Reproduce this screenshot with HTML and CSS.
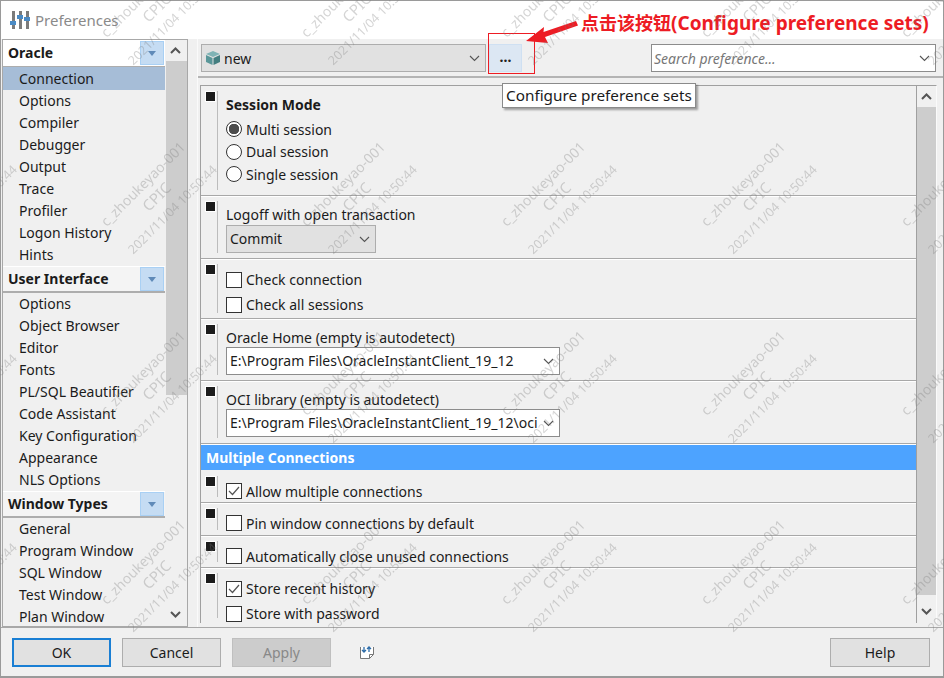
FILE: index.html
```html
<!DOCTYPE html>
<html lang="en">
<head>
    <meta charset="UTF-8">
    <meta name="viewport" content="width=device-width, initial-scale=1.0">
    <title>Preferences</title>
    <link rel="stylesheet" href="styles.css">
</head>
<body>
    <svg class="defs" width="0" height="0">
        <symbol id="chev-down" viewBox="0 0 11 7"><path d="M1 1l4.500 4.500L10 1" fill="none" stroke="currentColor" stroke-width="1.100"/></symbol>
        <symbol id="chev-up" viewBox="0 0 11 7"><path d="M1 6l4.500-4.500L10 6" fill="none" stroke="currentColor" stroke-width="2"/></symbol>
        <symbol id="chev-bold" viewBox="0 0 11 7"><path d="M1 1l4.500 4.500L10 1" fill="none" stroke="currentColor" stroke-width="2"/></symbol>
        <symbol id="tick" viewBox="0 0 16 16"><path d="M3 8l3.500 3.500L13 4" fill="none" stroke="#555" stroke-width="1.200"/></symbol>
    </svg>

    <div class="window">
        <header class="titlebar">
            <svg class="app-icon" width="20" height="20" viewBox="0 0 20 20">
                <path d="M2 1h3v18H2zM9 1h3v18H9zM16 1h3v18h-3z" fill="#7b7b7b"/>
                <path d="M0 11h6v4H0zM7 5h6v4H7zM14 7h6v4h-6z" fill="#4a8ac4"/>
            </svg>
            <span class="title">Preferences</span>
        </header>

        <div class="content">
            <aside class="sidebar">
                <div class="nav">
                    <div class="nav-head first">Oracle<span class="collapse"></span></div>
                    <div class="nav-item active">Connection</div>
                    <div class="nav-item">Options</div>
                    <div class="nav-item">Compiler</div>
                    <div class="nav-item">Debugger</div>
                    <div class="nav-item">Output</div>
                    <div class="nav-item">Trace</div>
                    <div class="nav-item">Profiler</div>
                    <div class="nav-item">Logon History</div>
                    <div class="nav-item">Hints</div>
                    <div class="nav-head">User Interface<span class="collapse"></span></div>
                    <div class="nav-item">Options</div>
                    <div class="nav-item">Object Browser</div>
                    <div class="nav-item">Editor</div>
                    <div class="nav-item">Fonts</div>
                    <div class="nav-item">PL/SQL Beautifier</div>
                    <div class="nav-item">Code Assistant</div>
                    <div class="nav-item">Key Configuration</div>
                    <div class="nav-item">Appearance</div>
                    <div class="nav-item">NLS Options</div>
                    <div class="nav-head">Window Types<span class="collapse"></span></div>
                    <div class="nav-item">General</div>
                    <div class="nav-item">Program Window</div>
                    <div class="nav-item">SQL Window</div>
                    <div class="nav-item">Test Window</div>
                    <div class="nav-item">Plan Window</div>
                </div>
                <div class="scrollbar side-scroll">
                    <svg class="arrow"><use href="#chev-up"/></svg>
                    <div class="thumb"></div>
                    <svg class="arrow down"><use href="#chev-bold"/></svg>
                </div>
            </aside>

            <main class="main">
                <div class="toolbar">
                    <div class="combo set-combo">
                        <svg class="box-icon" width="16" height="16" viewBox="0 0 16 16">
                            <path d="M8 1l7 3-7 3-7-3z" fill="#7fb3b5"/>
                            <path d="M1 5l6.500 3v7L1 12z" fill="#5a9799"/>
                            <path d="M8.500 8L15 5v7l-6.500 3z" fill="#437e80"/>
                        </svg>
                        <span class="combo-text">new</span>
                        <svg class="chev"><use href="#chev-down"/></svg>
                    </div>
                    <button class="dots">...</button>
                    <div class="combo search">
                        <span class="placeholder">Search preference...</span>
                        <svg class="chev"><use href="#chev-down"/></svg>
                    </div>
                </div>

                <div class="panel">
                    <div class="sections">
                        <section class="section s-mode">
                            <h3 class="sec-title">Session Mode</h3>
                            <label class="row"><span class="radio on"></span>Multi session</label>
                            <label class="row"><span class="radio"></span>Dual session</label>
                            <label class="row"><span class="radio"></span>Single session</label>
                        </section>
                        <section class="section s-logoff">
                            <div class="field-label">Logoff with open transaction</div>
                            <div class="combo small">
                                <span class="combo-text">Commit</span>
                                <svg class="chev"><use href="#chev-down"/></svg>
                            </div>
                        </section>
                        <section class="section s-check">
                            <label class="row wide"><span class="check"></span>Check connection</label>
                            <label class="row wide"><span class="check"></span>Check all sessions</label>
                        </section>
                        <section class="section s-path">
                            <div class="field-label">Oracle Home (empty is autodetect)</div>
                            <div class="combo path">
                                <span class="combo-text">E:\Program Files\OracleInstantClient_19_12</span>
                                <svg class="chev"><use href="#chev-down"/></svg>
                            </div>
                        </section>
                        <section class="section s-path">
                            <div class="field-label">OCI library (empty is autodetect)</div>
                            <div class="combo path">
                                <span class="combo-text">E:\Program Files\OracleInstantClient_19_12\oci</span>
                                <svg class="chev"><use href="#chev-down"/></svg>
                            </div>
                        </section>
                        <div class="band">Multiple Connections</div>
                        <section class="section s-one">
                            <label class="row"><span class="check"><svg width="16" height="16"><use href="#tick"/></svg></span>Allow multiple connections</label>
                        </section>
                        <section class="section s-one tall">
                            <label class="row"><span class="check"></span>Pin window connections by default</label>
                        </section>
                        <section class="section s-one">
                            <label class="row"><span class="check"></span>Automatically close unused connections</label>
                        </section>
                        <section class="section s-last">
                            <label class="row wide"><span class="check"><svg width="16" height="16"><use href="#tick"/></svg></span>Store recent history</label>
                            <label class="row wide"><span class="check"></span>Store with password</label>
                        </section>
                    </div>
                    <div class="scrollbar main-scroll">
                        <svg class="arrow"><use href="#chev-up"/></svg>
                        <div class="thumb"></div>
                        <svg class="arrow down"><use href="#chev-bold"/></svg>
                    </div>
                </div>
            </main>
        </div>

        <footer class="footer">
            <button class="btn default">OK</button>
            <button class="btn">Cancel</button>
            <button class="btn disabled">Apply</button>
            <svg class="save-icon" width="16" height="16" viewBox="0 0 16 16">
                <path d="M1.500 2v11.500h9l4-4V2" fill="#fff" stroke="#777"/>
                <path d="M10.500 13.500v-4h4" fill="none" stroke="#777"/>
                <path d="M5 2v5M3 5l2 2 2-2M10 7V2M8 4l2-2 2 2" fill="none" stroke="#2d6ca8" stroke-width="1.300"/>
            </svg>
            <button class="btn help">Help</button>
        </footer>
    </div>

    <!-- things drawn on top of the dialog -->
    <div class="tooltip">Configure preference sets</div>
    <div class="mark-box"></div>
    <svg class="arrow-note" width="60" height="30" viewBox="0 0 60 30">
        <path d="M1 23L19 9l-.500 5L51 3l2 4.500L20 19l3 6z" fill="#ed1c24"/>
    </svg>
    <div class="note">点击该按钮<span class="note-en">(Configure preference sets)</span></div>

    <svg class="watermark" width="944" height="678">
        <defs>
            <pattern id="wm" x="43" y="-105" width="200" height="189" patternUnits="userSpaceOnUse">
                <text class="wm-user" transform="rotate(-45 100 100)" x="100" y="105">c_zhoukeyao-001</text>
                <text class="wm-org" transform="rotate(-45 114 113)" x="114" y="118">CPIC</text>
                <text class="wm-date" transform="rotate(-45 129 125)" x="129" y="130">2021/11/04 10:50:44</text>
            </pattern>
        </defs>
        <rect width="944" height="678" fill="url(#wm)"/>
    </svg>
</body>
</html>
```

FILE: styles.css
```css
* {
    box-sizing: border-box;
}

body {
    margin: 0;
    width: 944px;
    height: 678px;
    overflow: hidden;
    position: relative;
    font-family: "Noto Sans", sans-serif;
    font-size: 14px;
    color: #1b1b1b;
    background: #f0f0f0;
}

.defs {
    position: absolute;
}

.window {
    height: 678px;
    display: flex;
    flex-direction: column;
    border: 1px solid #9a9a9a;
    border-width: 1px 1px 2px 1px;
}

.titlebar {
    height: 38px;
    flex: none;
    display: flex;
    align-items: center;
    padding-left: 9px;
    background: #fff;
}

.title {
    margin-left: 5px;
    font-size: 15px;
    color: #8a8a8a;
}

.content {
    height: 588px;
    flex: none;
    display: flex;
}

/* left tree */
.sidebar {
    width: 186px;
    flex: none;
    margin-left: 1px;
    display: flex;
    border: 1px solid #a8a8a8;
    overflow: hidden;
}

.nav {
    width: 162px;
    flex: none;
}

.nav-head {
    height: 27px;
    display: flex;
    align-items: center;
    justify-content: space-between;
    padding: 0 0 2px 5px;
    font-weight: 700;
    background: #f4f4f4;
    border-top: 1px solid #fff;
    border-bottom: 2px solid #adadad;
}

.nav-head.first {
    height: 28px;
    border-top: 0;
    background: #fff;
}

.collapse {
    width: 24px;
    height: 24px;
    margin: 0 1px -2px 0;
    display: flex;
    align-items: center;
    justify-content: center;
    background: #c5dcf3;
    border: 1px solid #a9d0f4;
}

.collapse::after {
    content: "";
    border: 4px solid transparent;
    border-top: 5px solid #5f8ab8;
    border-bottom: 0;
}

.nav-item {
    height: 22px;
    line-height: 22px;
    padding-left: 16px;
    white-space: nowrap;
}

.nav-item.active {
    height: 23px;
    margin-top: -1px;
    line-height: 24px;
    background: #a6bdd7;
}

/* scrollbars */
.scrollbar {
    position: relative;
    width: 19px;
    flex: none;
    color: #555;
}

.scrollbar .arrow {
    position: absolute;
    left: 4px;
    top: 7px;
    width: 11px;
    height: 7px;
}

.scrollbar .arrow.down {
    top: auto;
    bottom: 8px;
}

.scrollbar .thumb {
    margin-top: 21px;
    background: #cdcdcd;
}

.side-scroll {
    margin-left: 1px;
    width: 21px;
}

.side-scroll .thumb {
    height: 334px;
}

.main-scroll .thumb {
    height: 488px;
}

/* right side */
.main {
    flex: 1;
    min-width: 0;
    margin-left: 9px;
    display: flex;
    flex-direction: column;
    border-left: 1px solid #fafafa;
}

.toolbar {
    height: 39px;
    flex: none;
    display: flex;
    padding: 5px 0 0 3px;
    border-bottom: 2px solid #b4b4b4;
}

.combo {
    height: 28px;
    display: flex;
    align-items: center;
    border: 1px solid #adadad;
    background: #e1e1e1;
    white-space: nowrap;
    overflow: hidden;
}

.combo-text {
    padding: 0 0 2px 3px;
}

.chev {
    width: 11px;
    height: 7px;
    margin-left: auto;
    margin-right: 5px;
    flex: none;
    color: #555;
}

.set-combo {
    width: 285px;
    padding-left: 3px;
}

.set-combo .combo-text {
    padding: 0 0 0 3px;
}

.box-icon {
    flex: none;
}

.dots {
    width: 33px;
    height: 28px;
    margin-left: 3px;
    padding: 0 0 4px;
    font-family: inherit;
    font-size: 14px;
    font-weight: 700;
    color: #222;
    background: #dce7f3;
    border: 1px solid #cfe0f2;
}

.search {
    width: 285px;
    height: 28px;
    margin-left: 129px;
    background: #fff;
    border-color: #8c8c8c;
}

.placeholder {
    padding-left: 2px;
    font-style: italic;
    color: #777;
}

.panel {
    height: 538px;
    margin: 7px 6px 0 2px;
    display: flex;
    border: 1px solid #a0a0a0;
    border-right-color: #fafafa;
    border-bottom: 0;
    overflow: hidden;
}

.sections {
    flex: 1;
    min-width: 0;
    border-right: 1px solid #a0a0a0;
}

.section {
    position: relative;
    padding-left: 25px;
    border-bottom: 1px solid #a8a8a8;
    box-shadow: 0 1px 0 #fff;
}

/* the black square and thin rule on the left of each group */
.section::before {
    content: "";
    position: absolute;
    left: 5px;
    top: 6px;
    width: 9px;
    height: 9px;
    background: #1c1c1c;
    box-shadow: 0 0 0 1px #fff;
}

.section::after {
    content: "";
    position: absolute;
    left: 16px;
    top: 5px;
    bottom: 5px;
    width: 1px;
    background: #bcbcbc;
}

.s-mode {
    height: 110px;
    padding-top: 9px;
}

.s-logoff {
    height: 63px;
    padding-top: 9px;
}

.s-check {
    height: 60px;
    padding-top: 8px;
}

.s-path {
    height: 62px;
    padding-top: 9px;
}

.s-path + .s-path {
    height: 63px;
}

.s-one {
    height: 32px;
    padding-top: 9px;
}

.s-one.tall {
    height: 33px;
}

.s-last {
    height: 55px;
    padding-top: 8px;
    border-bottom: 0;
}

.sec-title {
    margin: 0 0 3px;
    height: 20px;
    line-height: 20px;
    font-size: 14px;
    font-weight: 700;
}

.field-label {
    height: 20px;
    line-height: 20px;
}

.row {
    height: 22.500px;
    display: flex;
    align-items: center;
    white-space: nowrap;
}

.row.wide {
    height: 25px;
}

.radio {
    width: 16px;
    height: 16px;
    margin-right: 4px;
    flex: none;
    border: 1px solid #333;
    border-radius: 50%;
    background: #fff;
}

.radio.on {
    background: radial-gradient(circle, #4d4d4d 0 5px, #fff 5.500px);
}

.check {
    width: 16px;
    height: 16px;
    margin-right: 4px;
    flex: none;
    border: 1px solid #333;
    background: #fff;
}

.check svg {
    display: block;
    margin: -1px;
}

.small {
    width: 150px;
}

.path {
    width: 334px;
    margin-top: -1px;
    background: #fff;
    border-color: #8c8c8c;
}

.band {
    height: 26px;
    margin-top: 1px;
    line-height: 25px;
    padding-left: 5px;
    font-weight: 700;
    color: #fff;
    background: #4da3ff;
    border-bottom: 1px solid #f0f0f0;
}

/* bottom buttons */
.footer {
    flex: 1;
    display: flex;
    align-items: flex-start;
    padding: 10px 13px 0 11px;
    gap: 11px;
    border-top: 1px solid #a8a8a8;
}

.btn {
    width: 99px;
    height: 29px;
    padding: 0;
    font-family: inherit;
    font-size: 14px;
    color: #1b1b1b;
    background: #e1e1e1;
    border: 1px solid #adadad;
}

.btn.default {
    border: 2px solid #1a7fd4;
}

.btn.disabled {
    color: #888;
    background: #cccccc;
    border-color: #bfbfbf;
}

.save-icon {
    margin: 7px 0 0 17px;
}

.btn.help {
    width: 100px;
    margin-left: auto;
}

/* overlays */
.tooltip {
    position: absolute;
    left: 502px;
    top: 83px;
    width: 194px;
    height: 25px;
    line-height: 23px;
    padding-left: 3px;
    font-size: 15.300px;
    white-space: nowrap;
    background: #fff;
    border: 1px solid #8a8a8a;
    box-shadow: 2px 2px 2px rgba(0, 0, 0, .35);
}

.mark-box {
    position: absolute;
    left: 488px;
    top: 33px;
    width: 47px;
    height: 41px;
    border: 1px solid #ed1c24;
}

.arrow-note {
    position: absolute;
    left: 525px;
    top: 18px;
}

.note {
    position: absolute;
    left: 581px;
    top: 9px;
    font-family: "Noto Sans", "Noto Sans CJK SC", sans-serif;
    font-size: 18px;
    font-weight: 700;
    line-height: 28px;
    color: #ed1c24;
    white-space: nowrap;
}

.note-en {
    font-size: 19px;
}

.watermark {
    position: absolute;
    left: 0;
    top: 0;
    pointer-events: none;
}

.watermark text {
    font-family: "Noto Sans", sans-serif;
    text-anchor: middle;
    fill: rgba(120, 120, 120, .32);
}

.wm-user {
    font-size: 14px;
}

.wm-org {
    font-size: 15px;
}

.wm-date {
    font-size: 12.500px;
}
```
